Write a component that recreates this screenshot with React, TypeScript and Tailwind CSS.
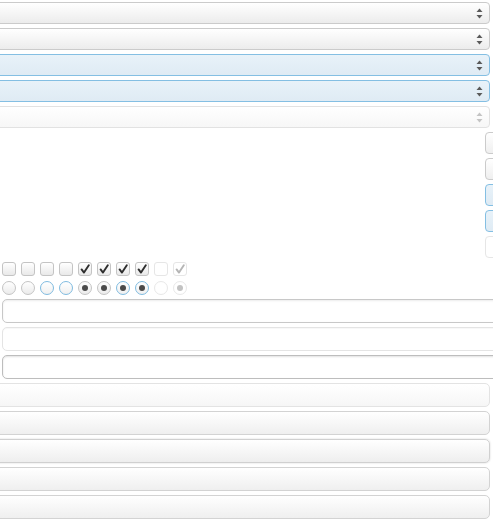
import { FC } from 'react';

type Tone = 'normal' | 'active' | 'disabled';

const Arrows: FC<{ tone: Tone }> = ({ tone }) => {
  const fill = tone === 'disabled' ? '#c4c4c4' : '#5a5a5a';
  return (
    <svg width="7" height="11" viewBox="0 0 7 11" className="shrink-0">
      <polygon points="3.5,0.5 6.5,4 0.5,4" fill={fill} />
      <polygon points="0.5,7 6.5,7 3.5,10.5" fill={fill} />
    </svg>
  );
};

const Select: FC<{ tone: Tone }> = ({ tone }) => {
  const skin =
    tone === 'active'
      ? 'border-[#84bfe3] bg-gradient-to-b from-[#e8f2f9] to-[#dfebf4]'
      : tone === 'disabled'
        ? 'border-[#e2e2e2] bg-gradient-to-b from-white to-[#f7f7f7]'
        : 'border-[#cbcbcb] bg-gradient-to-b from-white to-[#ececec]';
  return (
    <div className={`ml-[-10px] mr-[3px] h-[22px] rounded-[4px] border flex items-center justify-end pr-[6px] ${skin}`}>
      <Arrows tone={tone} />
    </div>
  );
};

const SideBox: FC<{ tone: Tone }> = ({ tone }) => {
  const skin =
    tone === 'active'
      ? 'border-[#84bfe3] bg-gradient-to-b from-[#e8f2f9] to-[#dfebf4]'
      : tone === 'disabled'
        ? 'border-[#e6e6e6] bg-white'
        : 'border-[#cbcbcb] bg-gradient-to-b from-white to-[#efefef]';
  return <div className={`ml-[485px] w-[30px] h-[22px] rounded-[4px] border ${skin}`} />;
};

const Check: FC<{ light?: boolean }> = ({ light }) => (
  <svg width="10" height="10" viewBox="0 0 10 10">
    <path
      d="M1.6 5.4 L4 8.6 L8.8 1.2"
      fill="none"
      stroke={light ? '#b5b5b5' : '#2e2e2e'}
      strokeWidth="1.9"
      strokeLinecap="round"
      strokeLinejoin="round"
    />
  </svg>
);

const boxes: { checked: boolean; disabled?: boolean }[] = [
  { checked: false },
  { checked: false },
  { checked: false },
  { checked: false },
  { checked: true },
  { checked: true },
  { checked: true },
  { checked: true },
  { checked: false, disabled: true },
  { checked: true, disabled: true },
];

const radios: { checked: boolean; focus?: boolean; disabled?: boolean }[] = [
  { checked: false },
  { checked: false },
  { checked: false, focus: true },
  { checked: false, focus: true },
  { checked: true },
  { checked: true },
  { checked: true, focus: true },
  { checked: true, focus: true },
  { checked: false, disabled: true },
  { checked: true, disabled: true },
];

const TextInput: FC<{ tone: 'normal' | 'disabled' | 'focus' }> = ({ tone }) => {
  const skin =
    tone === 'disabled'
      ? 'border-[#e4e4e4] shadow-[inset_0_1px_1px_rgba(0,0,0,0.03)]'
      : tone === 'focus'
        ? 'border-[#bdbdbd] shadow-[inset_0_1px_2px_rgba(0,0,0,0.12)]'
        : 'border-[#c8c8c8] shadow-[inset_0_1px_2px_rgba(0,0,0,0.08)]';
  return <div className={`ml-[2px] w-[520px] h-[24px] rounded-[5px] border bg-white ${skin}`} />;
};

const Button: FC<{ tone: 'disabled' | 'normal' | 'hover' }> = ({ tone }) => {
  const skin =
    tone === 'disabled'
      ? 'border-[#e3e3e3] from-white to-[#f6f6f6]'
      : tone === 'hover'
        ? 'border-[#d0d0d0] from-white to-[#eeeeee] shadow-[0_0_2px_rgba(0,0,0,0.18)]'
        : 'border-[#d3d3d3] from-white to-[#efefef]';
  return <div className={`ml-[-10px] mr-[3px] h-[24px] rounded-[5px] border bg-gradient-to-b ${skin}`} />;
};

export default function App() {
  return (
    <div className="w-[493px] h-[521px] overflow-hidden bg-white font-['Liberation_Sans',sans-serif]">
      <div className="flex flex-col gap-[4px] pt-[2px]">
        <Select tone="normal" />
        <Select tone="normal" />
        <Select tone="active" />
        <Select tone="active" />
        <Select tone="disabled" />

        <SideBox tone="normal" />
        <SideBox tone="normal" />
        <SideBox tone="active" />
        <SideBox tone="active" />
        <SideBox tone="disabled" />

        <div className="flex flex-col gap-[5px] pl-[2px]">
          <div className="flex gap-[5px]">
            {boxes.map((b, i) => (
              <div
                key={i}
                className={`w-[14px] h-[14px] rounded-[3px] border flex items-center justify-center ${
                  b.disabled
                    ? 'border-[#e6e6e6] bg-white'
                    : 'border-[#c4c4c4] bg-gradient-to-b from-white to-[#e9e9e9]'
                }`}
              >
                {b.checked && <Check light={b.disabled} />}
              </div>
            ))}
          </div>
          <div className="flex gap-[5px]">
            {radios.map((r, i) => (
              <div
                key={i}
                className={`w-[14px] h-[14px] rounded-full border flex items-center justify-center ${
                  r.disabled
                    ? 'border-[#e8e8e8] bg-white'
                    : r.focus
                      ? 'border-[#7fbbe0] bg-gradient-to-b from-white to-[#f0f0f0]'
                      : 'border-[#c4c4c4] bg-gradient-to-b from-white to-[#ebebeb]'
                }`}
              >
                {r.checked && (
                  <div className={`w-[6px] h-[6px] rounded-full ${r.disabled ? 'bg-[#c2c2c2]' : 'bg-[#4a4a4a]'}`} />
                )}
              </div>
            ))}
          </div>
        </div>

        <TextInput tone="normal" />
        <TextInput tone="disabled" />
        <TextInput tone="focus" />

        <Button tone="disabled" />
        <Button tone="normal" />
        <Button tone="hover" />
        <Button tone="normal" />
        <Button tone="normal" />
      </div>
    </div>
  );
}
